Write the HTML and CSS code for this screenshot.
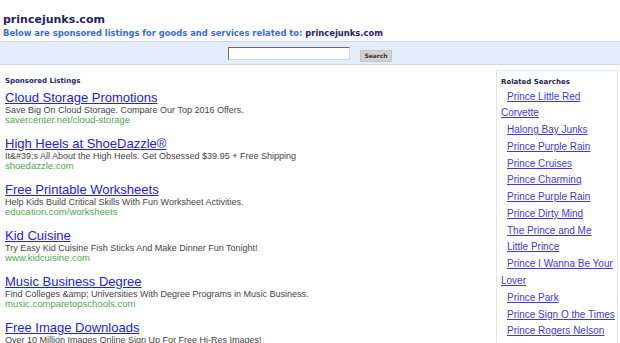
FILE: index.html
```html
<!DOCTYPE html>
<html>
<head>
<meta charset="utf-8">
<title>princejunks.com</title>
<link rel="stylesheet" href="styles.css">
</head>
<body>
<div class="header">
  <div class="site-title">princejunks.com</div>
  <div class="subtitle">Below are sponsored listings for goods and services related to: <span class="domain">princejunks.com</span></div>
</div>
<div class="searchbar">
  <input class="search-input" type="text">
  <button class="search-btn">Search</button>
</div>
<div class="main">
  <div class="listings">
    <div class="section-label">Sponsored Listings</div>
    <div class="ad">
      <a class="ad-title" href="#">Cloud Storage Promotions</a>
      <div class="ad-desc">Save Big On Cloud Storage. Compare Our Top 2016 Offers.</div>
      <div class="ad-url">savercenter.net/cloud-storage</div>
    </div>
    <div class="ad">
      <a class="ad-title" href="#">High Heels at ShoeDazzle®</a>
      <div class="ad-desc">It&amp;#39;s All About the High Heels. Get Obsessed $39.95 + Free Shipping</div>
      <div class="ad-url">shoedazzle.com</div>
    </div>
    <div class="ad">
      <a class="ad-title" href="#">Free Printable Worksheets</a>
      <div class="ad-desc">Help Kids Build Critical Skills With Fun Worksheet Activities.</div>
      <div class="ad-url">education.com/worksheets</div>
    </div>
    <div class="ad">
      <a class="ad-title" href="#">Kid Cuisine</a>
      <div class="ad-desc">Try Easy Kid Cuisine Fish Sticks And Make Dinner Fun Tonight!</div>
      <div class="ad-url">www.kidcuisine.com</div>
    </div>
    <div class="ad">
      <a class="ad-title" href="#">Music Business Degree</a>
      <div class="ad-desc">Find Colleges &amp;amp; Universities With Degree Programs in Music Business.</div>
      <div class="ad-url">music.comparetopschools.com</div>
    </div>
    <div class="ad">
      <a class="ad-title" href="#">Free Image Downloads</a>
      <div class="ad-desc">Over 10 Million Images Online Sign Up For Free Hi-Res Images!</div>
    </div>
  </div>
  <div class="sidebar">
    <div class="section-label side-label">Related Searches</div>
    <div class="rel"><a href="#">Prince Little Red Corvette</a></div>
    <div class="rel"><a href="#">Halong Bay Junks</a></div>
    <div class="rel"><a href="#">Prince Purple Rain</a></div>
    <div class="rel"><a href="#">Prince Cruises</a></div>
    <div class="rel"><a href="#">Prince Charming</a></div>
    <div class="rel"><a href="#">Prince Purple Rain</a></div>
    <div class="rel"><a href="#">Prince Dirty Mind</a></div>
    <div class="rel"><a href="#">The Prince and Me</a></div>
    <div class="rel"><a href="#">Little Prince</a></div>
    <div class="rel"><a href="#">Prince I Wanna Be Your Lover</a></div>
    <div class="rel"><a href="#">Prince Park</a></div>
    <div class="rel"><a href="#">Prince Sign O the Times</a></div>
    <div class="rel"><a href="#">Prince Rogers Nelson</a></div>
  </div>
</div>
</body>
</html>
```
FILE: styles.css
```css
html, body {
  margin: 0;
  padding: 0;
  background: #ffffff;
  overflow: hidden;
}
body {
  width: 620px;
  height: 343px;
  font-family: "Liberation Sans", Arial, sans-serif;
}
.header {
  padding: 12.7px 0 0 3px;
}
.site-title {
  font-family: "DejaVu Sans", Verdana, sans-serif;
  font-weight: bold;
  font-size: 11px;
  line-height: 13px;
  color: #1e1e66;
}
.subtitle {
  margin-top: 2px;
  font-family: "DejaVu Sans", Verdana, sans-serif;
  font-weight: bold;
  font-size: 8.4px;
  line-height: 11px;
  color: #4169dc;
  white-space: nowrap;
}
.domain {
  color: #1e1e66;
}
.searchbar {
  margin-top: 2.4px;
  height: 22px;
  box-sizing: content-box;
  background: #e5ecf9;
  border-top: 1px solid #c9d7f1;
  border-bottom: 1px solid #c9d7f1;
  display: flex;
  justify-content: center;
  align-items: flex-start;
  gap: 10px;
}
.search-input {
  margin: 5px 0 0 0;
  padding: 0;
  width: 122px;
  height: 13px;
  box-sizing: border-box;
  border-style: solid;
  border-width: 1px;
  border-color: #6b6b6b #d4d4d4 #d4d4d4 #6b6b6b;
  background: #ffffff;
}
.search-btn {
  margin: 8px 0 0 0;
  padding: 0;
  width: 32px;
  height: 12px;
  box-sizing: border-box;
  background: #d2d2d2;
  border: 1px solid #c4c4c4;
  font-family: "DejaVu Sans", Verdana, sans-serif;
  font-weight: bold;
  font-size: 6px;
  line-height: 10px;
  color: #333333;
}
.main {
  display: flex;
  margin-top: 5px;
}
.listings {
  flex: 1;
  padding: 6px 0 0 5px;
}
.section-label {
  font-family: "DejaVu Sans", Verdana, sans-serif;
  font-weight: bold;
  font-size: 7px;
  line-height: 10px;
  color: #24246a;
  margin-bottom: 3.5px;
}
.ad {
  margin-bottom: 11px;
}
.ad-title {
  display: block;
  font-size: 13px;
  line-height: 15px;
  color: #2020e8;
  text-decoration: underline;
  white-space: nowrap;
}
.ad-desc {
  font-size: 9px;
  line-height: 10px;
  color: #444444;
  white-space: nowrap;
}
.ad-url {
  font-size: 9.5px;
  line-height: 10px;
  color: #4caa4c;
  white-space: nowrap;
}
.sidebar {
  width: 122px;
  margin-right: 2px;
  box-sizing: border-box;
  border: 1px solid #dfe5f4;
  padding: 6px 0 0 4px;
  height: 290px;
}
.side-label {
  color: #1e1e50;
  margin-bottom: 1.5px;
}
.rel {
  font-size: 10px;
  line-height: 16.76px;
  text-indent: 6px;
}
.rel a {
  color: #3b3bdc;
  text-decoration: underline;
}
```
